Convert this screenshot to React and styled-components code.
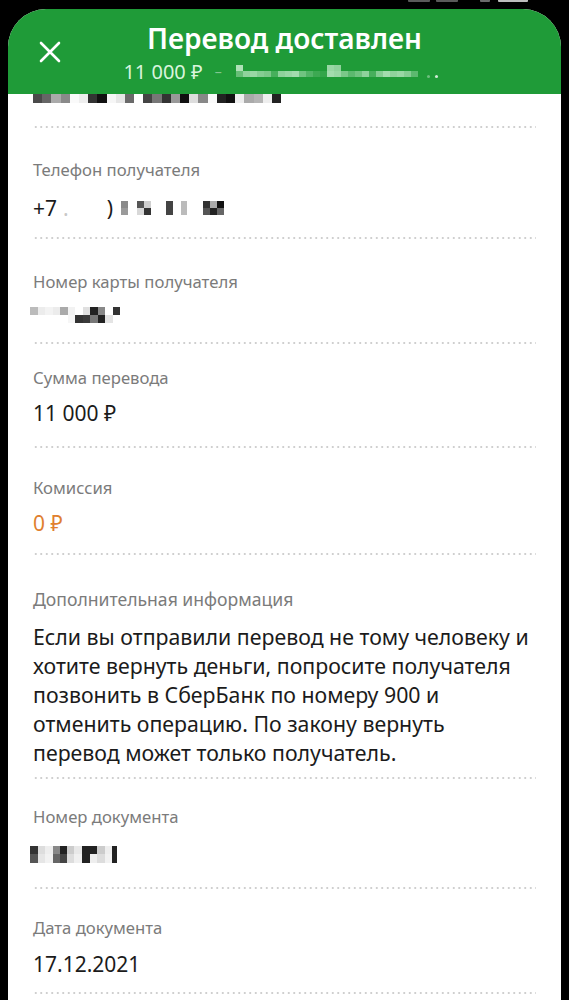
import React from 'react';
import styled, { createGlobalStyle } from 'styled-components';

const Global = createGlobalStyle`
  html, body { margin: 0; padding: 0; background: #000; }
  body { font-family: "Noto Sans", "Open Sans", sans-serif; -webkit-font-smoothing: antialiased; }
`;

const Screen = styled.div`
  width: 569px;
  height: 1000px;
  background: #000;
  display: flex;
  flex-direction: column;
  overflow: hidden;
`;

const StatusBar = styled.div`
  height: 9px;
  flex: none;
  display: flex;
  align-items: flex-start;
`;

const StatusMark = styled.span`
  height: 2px;
  width: ${p => p.$w}px;
  margin-left: ${p => p.$ml}px;
  background: ${p => p.$c};
  border-radius: 0 0 1px 1px;
`;

const Panel = styled.div`
  flex: 1;
  margin: 0 8px;
  background: #fff;
  border-radius: 38px 38px 0 0;
  overflow: hidden;
  display: flex;
  flex-direction: column;
`;

const Header = styled.header`
  height: 85px;
  flex: none;
  background: #1f9b38;
  display: grid;
  grid-template-columns: 84px 1fr 84px;
`;

const CloseButton = styled.button`
  align-self: center;
  justify-self: center;
  width: 24px;
  height: 24px;
  padding: 0;
  border: 0;
  background: none;
  display: flex;
  align-items: center;
  justify-content: center;
`;

const HeaderText = styled.div`
  padding-top: 13px;
  display: flex;
  flex-direction: column;
  align-items: center;
`;

const Title = styled.h1`
  margin: 0;
  font-size: 28px;
  line-height: 32px;
  font-weight: 600;
  color: #fff;
  white-space: nowrap;
`;

const Subtitle = styled.div`
  margin-top: 6px;
  margin-left: -8px;
  display: flex;
  align-items: center;
  height: 24px;
  font-size: 20px;
  line-height: 24px;
  color: rgba(236, 255, 238, 0.92);
  white-space: nowrap;
`;

const Dash = styled.span`
  margin-left: 12px;
  color: rgba(255, 255, 255, 0.45);
  font-size: 14px;
`;

const Dot = styled.span`
  width: 3px;
  height: 3px;
  margin-left: ${p => p.$ml}px;
  margin-top: 8px;
  background: rgba(255, 255, 255, ${p => p.$a});
  border-radius: 50%;
`;

const Body = styled.div`
  padding: 0 25px;
  display: flex;
  flex-direction: column;
`;

const TopStrip = styled.div`
  height: 9px;
  display: flex;
`;

const Divider = styled.div`
  height: 2px;
  margin-top: ${p => p.$mt || 0}px;
  background-image: radial-gradient(circle, #cfcfcf 0.8px, transparent 1.1px);
  background-size: 5.5px 2px;
  background-repeat: repeat-x;
`;

const Row = styled.section`
  padding: ${p => p.$pt}px 0 ${p => p.$pb}px;
  display: flex;
  flex-direction: column;
  gap: ${p => p.$gap}px;
`;

const Label = styled.div`
  font-size: ${p => (p.$wide ? 17.6 : 16.7)}px;
  line-height: 20px;
  color: #7b7b7b;
`;

const Value = styled.div`
  display: flex;
  align-items: center;
  height: 24px;
  font-size: 21px;
  line-height: 24px;
  color: ${p => (p.$accent ? '#e0802f' : '#1b1b1b')};
  white-space: nowrap;
`;

const Faint = styled.span`
  margin-left: ${p => p.$ml}px;
  color: ${p => p.$c};
`;

const Paragraph = styled.p`
  margin: 0;
  font-size: 21.3px;
  line-height: 29px;
  color: #1b1b1b;
  white-space: nowrap;
`;

const MosaicRow = styled.span`
  display: inline-flex;
  align-items: flex-start;
  margin-left: ${p => p.$ml || 0}px;
  margin-top: ${p => p.$mt || 0}px;
  filter: blur(0.5px);
  flex: none;
`;

const MosaicCol = styled.span`
  display: flex;
  flex-direction: column;
  width: ${p => p.$w}px;
`;

const Tile = styled.span`
  height: ${p => p.$h}px;
  background: ${p => p.$c || 'transparent'};
`;

function Mosaic({ cols, h, ml, mt }) {
  return (
    <MosaicRow $ml={ml} $mt={mt}>
      {cols.map((c, i) => (
        <MosaicCol key={i} $w={c[0]}>
          {c.slice(1).map((shade, j) => (
            <Tile key={j} $h={h} $c={shade} />
          ))}
        </MosaicCol>
      ))}
    </MosaicRow>
  );
}

const w = a => `rgba(235,255,238,${a})`;

const subtitleCells = [
  [7, w(0.7), w(0.35)], [7, null, w(0.55)], [7, null, w(0.6)], [7, null, w(0.5)],
  [7, null, w(0.45)], [7, null, w(0.2)], [7, null, w(0.55)], [7, null, w(0.6)],
  [7, null, w(0.65)], [7, null, w(0.4)], [7, null, w(0.25)], [7, null, w(0.15)],
  [7, null, w(0.1)], [7, w(0.6), w(0.65)], [7, w(0.55), w(0.6)], [7, null, w(0.45)],
  [7, null, w(0.3)], [7, null, w(0.4)], [7, null, w(0.55)], [7, null, w(0.2)],
  [7, null, w(0.5)], [7, null, w(0.65)], [7, null, w(0.55)], [7, null, w(0.6)],
  [7, null, w(0.5)], [7, null, w(0.3)],
];

const topShades = ['#4a4a4a', '#666', '#aaa', '#8a8a8a', '#fafafa', '#eee', '#333', '#111', '#f6f6f6', '#e6e6e6', '#6a6a6a', '#fff', '#444', '#777', '#333', '#999', '#111', '#ddd', '#888', '#fafafa', '#222', '#111', '#eee', '#aaa', '#b5b5b5', '#eee', '#222'];
const topCells = topShades.map(s => [9.2, s]);

const phoneCells = [
  [7, '#8a8a8a', '#9a9a9a'], [9, null, null], [7, '#555', '#d8d8d8'], [7, '#cfcfcf', '#333'],
  [15, null, null], [7, '#444', '#444'], [8, null, null], [6, '#bbb', '#bbb'],
  [16, null, null], [7, '#333', '#555'], [7, '#aaa', '#222'], [7, '#111', '#666'],
];

const cardCells = [
  [7.5, '#bbb', null], [7.5, '#ececec', null], [7.5, '#f3f3f3', null], [7.5, '#ececec', null],
  [7.5, '#aaa', null], [7.5, '#f2f2f2', '#f6f6f6'], [7.5, null, '#333'], [7.5, '#e0e0e0', '#3a3a3a'],
  [7.5, '#222', '#777'], [7.5, '#888', '#222'], [7.5, null, '#e4e4e4'], [7.5, '#333', null],
];

const docCells = [
  [7.5, '#333', '#555'], [7.5, '#ddd', '#e6e6e6'], [7.5, '#eee', '#f2f2f2'], [7, '#888', '#666'],
  [7, '#222', '#444'], [7, '#ccc', '#ddd'], [8, '#e8e8e8', '#f0f0f0'], [8, '#222', '#222'],
  [7.5, '#222', '#eee'], [7.5, '#ccc', '#ddd'], [7, '#eee', '#f2f2f2'], [5, '#222', '#222'],
];

function CloseIcon() {
  return (
    <svg width="22" height="22" viewBox="0 0 22 22" fill="none">
      <path d="M2 2 L20 20 M20 2 L2 20" stroke="#fff" strokeWidth="2.6" strokeLinecap="round" />
    </svg>
  );
}

const rows = [
  { label: 'Телефон получателя', pt: 32, gap: 16, pb: 17, kind: 'phone' },
  { label: 'Номер карты получателя', pt: 33, gap: 11, pb: 15, kind: 'card' },
  { label: 'Сумма перевода', pt: 24, gap: 13, pb: 21, value: '11 000 ₽' },
  { label: 'Комиссия', pt: 30, gap: 13, pb: 18, value: '0 ₽', accent: true },
  { label: 'Дополнительная информация', pt: 34, gap: 13, pb: 10, kind: 'text', wide: true },
  { label: 'Номер документа', pt: 28, gap: 15, pb: 21, kind: 'doc' },
  { label: 'Дата документа', pt: 29, gap: 14, pb: 16, value: '17.12.2021' },
];

function RowValue({ row }) {
  if (row.kind === 'phone') {
    return (
      <Value>
        +7
        <Faint $ml={6} $c="#c8c8c8">.</Faint>
        <Faint $ml={38} $c="#1b1b1b">)</Faint>
        <Mosaic cols={phoneCells} h={7} ml={8} />
      </Value>
    );
  }
  if (row.kind === 'card') {
    return (
      <Value>
        <Mosaic cols={cardCells} h={8} ml={-3} />
      </Value>
    );
  }
  if (row.kind === 'doc') {
    return (
      <Value>
        <Mosaic cols={docCells} h={8.5} ml={-3} />
      </Value>
    );
  }
  if (row.kind === 'text') {
    return (
      <Paragraph>
        Если вы отправили перевод не тому человеку и<br />
        хотите вернуть деньги, попросите получателя<br />
        позвонить в СберБанк по номеру 900 и<br />
        отменить операцию. По закону вернуть<br />
        перевод может только получатель.
      </Paragraph>
    );
  }
  return <Value $accent={row.accent}>{row.value}</Value>;
}

export default function App() {
  return (
    <Screen>
      <Global />
      <StatusBar>
        <StatusMark $w={22} $ml={408} $c="#5a5a5a" />
        <StatusMark $w={22} $ml={6} $c="#5a5a5a" />
        <StatusMark $w={10} $ml={22} $c="#6a6a6a" />
        <StatusMark $w={30} $ml={8} $c="#bdbdbd" />
      </StatusBar>
      <Panel>
        <Header>
          <CloseButton aria-label="Закрыть">
            <CloseIcon />
          </CloseButton>
          <HeaderText>
            <Title>Перевод доставлен</Title>
            <Subtitle>
              11 000 ₽
              <Dash>–</Dash>
              <Mosaic cols={subtitleCells} h={6} ml={14} mt={-2} />
              <Dot $ml={9} $a={0.35} />
              <Dot $ml={5} $a={0.8} />
            </Subtitle>
          </HeaderText>
          <div />
        </Header>
        <Body>
          <TopStrip>
            <Mosaic cols={topCells} h={9} ml={0} />
          </TopStrip>
          <Divider $mt={23} />
          {rows.map(row => (
            <React.Fragment key={row.label}>
              <Row $pt={row.pt} $gap={row.gap} $pb={row.pb}>
                <Label $wide={row.wide}>{row.label}</Label>
                <RowValue row={row} />
              </Row>
              <Divider />
            </React.Fragment>
          ))}
        </Body>
      </Panel>
    </Screen>
  );
}
